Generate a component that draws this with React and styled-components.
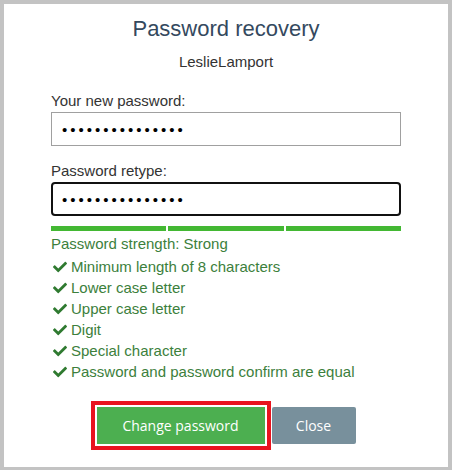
import React from "react";
import styled, { createGlobalStyle } from "styled-components";
import { FaCheck } from "react-icons/fa";

const Global = createGlobalStyle`
  html, body { margin: 0; padding: 0; background: #c3c3c3; }
  body { font-family: "Liberation Sans", Arial, sans-serif; }
  * { box-sizing: border-box; }
`;

const Page = styled.div`
  width: 452px;
  height: 470px;
  padding: 4px 4px 3px 4px;
  background: #c3c3c3;
`;

const Panel = styled.div`
  width: 444px;
  height: 463px;
  background: #fff;
  padding: 12px 47px 0 47px;
  display: flex;
  flex-direction: column;
`;

const Title = styled.h1`
  margin: 0;
  font-size: 22px;
  line-height: 26px;
  font-weight: normal;
  text-align: center;
  color: #34495e;
`;

const User = styled.div`
  margin-top: 11px;
  font-size: 15px;
  line-height: 18px;
  text-align: center;
  color: #333;
`;

const Field = styled.div`
  display: flex;
  flex-direction: column;
  margin-top: ${(p) => p.$top}px;
`;

const Label = styled.label`
  font-size: 15px;
  line-height: 18px;
  color: #333;
  margin-bottom: 2px;
`;

const Input = styled.input`
  width: 350px;
  height: 34px;
  font-family: "Liberation Sans", Arial, sans-serif;
  font-size: 15px;
  letter-spacing: 3px;
  color: #000;
  background: #fff;
  outline: none;
  border: ${(p) => (p.$focused ? "2px solid #111" : "1px solid #a0a0a0")};
  border-radius: ${(p) => (p.$focused ? "4px" : "0")};
  padding: 0 0 0 ${(p) => (p.$focused ? 9 : 10)}px;
`;

const Bars = styled.div`
  display: grid;
  grid-template-columns: repeat(3, 1fr);
  gap: 2px;
  margin-top: 10px;
  width: 350px;
`;

const Bar = styled.div`
  height: 5px;
  background: #43b833;
`;

const Strength = styled.div`
  margin-top: 4px;
  font-size: 15px;
  line-height: 18px;
  color: #3c803c;
`;

const Rules = styled.ul`
  list-style: none;
  margin: 3px 0 0 0;
  padding: 0;
`;

const Rule = styled.li`
  display: flex;
  align-items: center;
  gap: 4px;
  padding-left: 2px;
  font-size: 15px;
  line-height: 21px;
  color: #3c803c;
  svg { color: #2f7a30; flex: none; }
`;

const Actions = styled.div`
  margin-top: 25px;
  display: flex;
  justify-content: center;
  gap: 7px;
`;

const Button = styled.button`
  height: 37px;
  width: ${(p) => p.$w}px;
  border: none;
  border-radius: ${(p) => (p.$highlight ? "0" : "2px")};
  background: ${(p) => p.$bg};
  color: #fff;
  font-family: "Open Sans", "DejaVu Sans", sans-serif;
  font-size: 14px;
  padding: 0;
  cursor: pointer;
  outline: ${(p) => (p.$highlight ? "4px solid #e8141f" : "none")};
  outline-offset: 2px;
`;

const rules = [
  "Minimum length of 8 characters",
  "Lower case letter",
  "Upper case letter",
  "Digit",
  "Special character",
  "Password and password confirm are equal",
];

export default function App() {
  return (
    <>
      <Global />
      <Page>
        <Panel>
          <Title>Password recovery</Title>
          <User>LeslieLamport</User>
          <Field $top={21}>
            <Label>Your new password:</Label>
            <Input type="password" readOnly value="aaaaaaaaaaaaaaa" />
          </Field>
          <Field $top={16}>
            <Label>Password retype:</Label>
            <Input type="password" readOnly value="aaaaaaaaaaaaaaa" $focused />
          </Field>
          <Bars>
            <Bar />
            <Bar />
            <Bar />
          </Bars>
          <Strength>Password strength: Strong</Strength>
          <Rules>
            {rules.map((r) => (
              <Rule key={r}>
                <FaCheck size={14} />
                <span>{r}</span>
              </Rule>
            ))}
          </Rules>
          <Actions>
            <Button $w={168} $bg="#4caf50" $highlight>Change password</Button>
            <Button $w={84} $bg="#78909c">Close</Button>
          </Actions>
        </Panel>
      </Page>
    </>
  );
}
